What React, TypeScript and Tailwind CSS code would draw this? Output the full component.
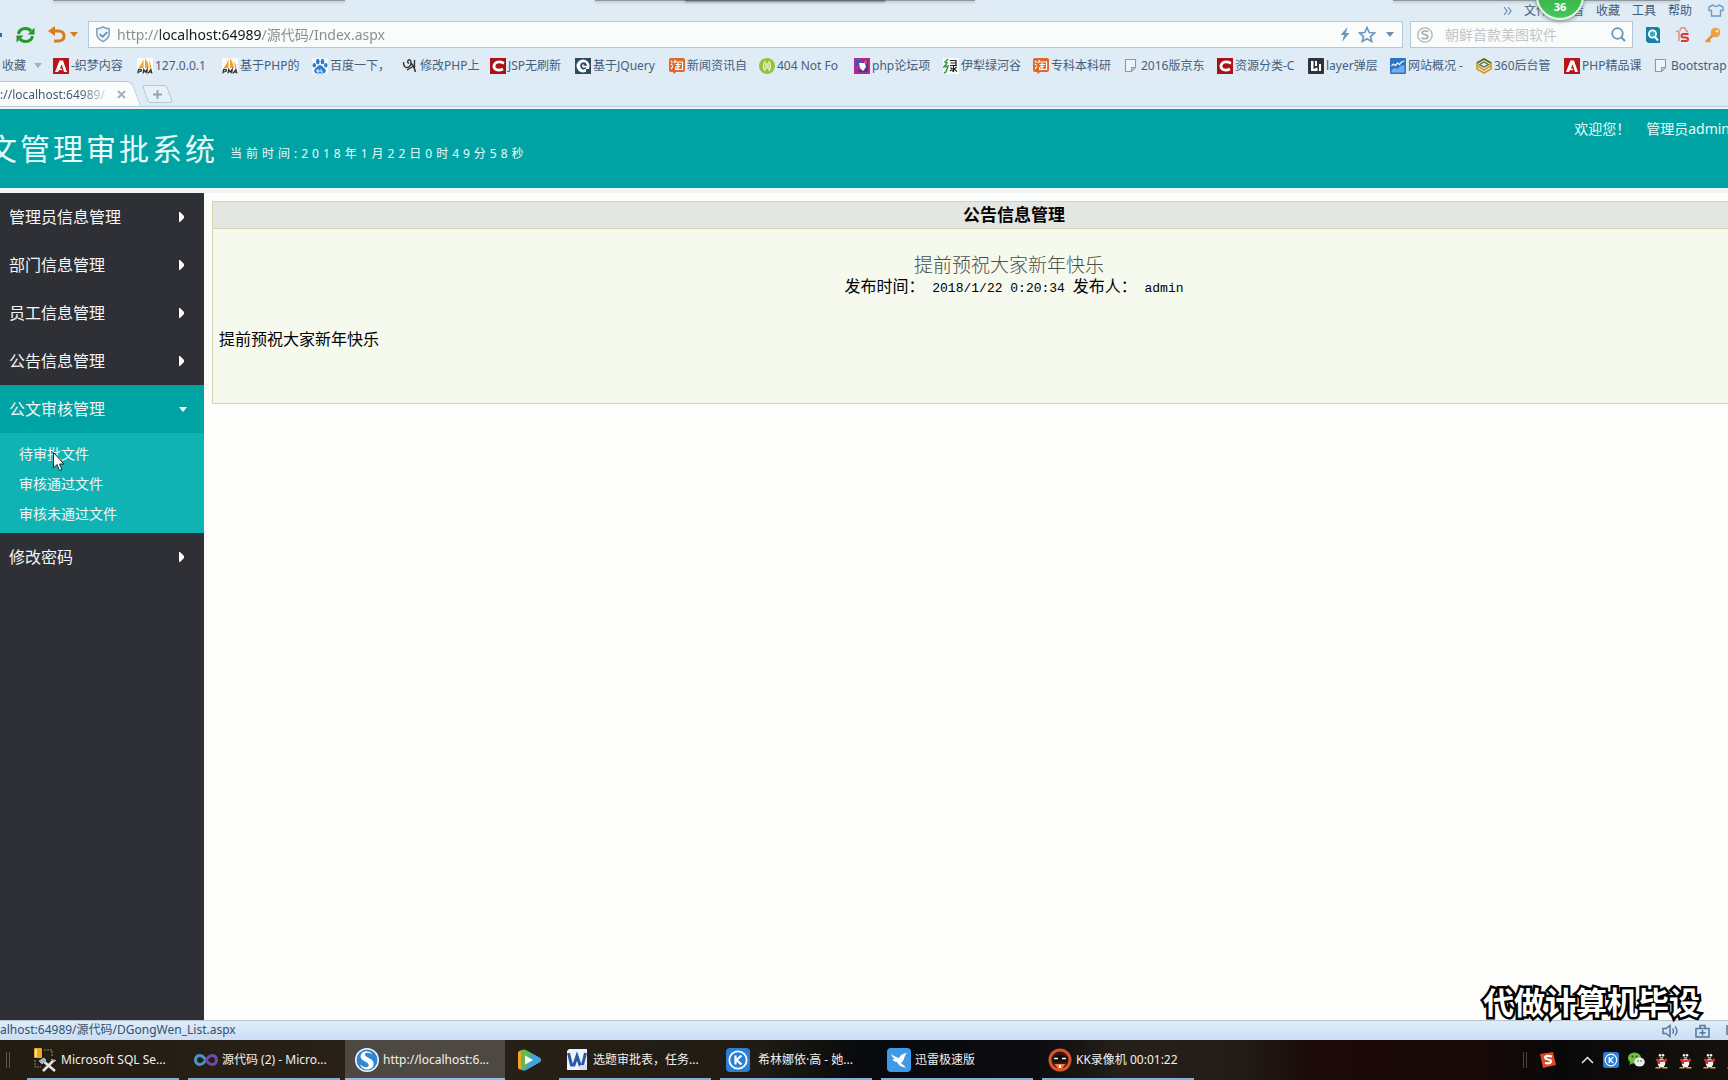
import React from 'react';
import clsx from 'clsx';

type IconName =
  | 'adobe'
  | 'pma'
  | 'baidu'
  | 'script'
  | 'redC'
  | 'darkC'
  | 'tao'
  | 'green'
  | 'forum'
  | 'lv'
  | 'page'
  | 'layer'
  | 'chart'
  | 'hex';

interface Bookmark {
  icon: IconName;
  label: string;
  width: string;
}

const bookmarks: Bookmark[] = [
  { icon: 'adobe', label: '-织梦内容', width: 'w-[84px]' },
  { icon: 'pma', label: '127.0.0.1', width: 'w-[85px]' },
  { icon: 'pma', label: '基于PHP的', width: 'w-[90px]' },
  { icon: 'baidu', label: '百度一下，', width: 'w-[90px]' },
  { icon: 'script', label: '修改PHP上', width: 'w-[88px]' },
  { icon: 'redC', label: 'JSP无刷新', width: 'w-[85px]' },
  { icon: 'darkC', label: '基于JQuery', width: 'w-[94px]' },
  { icon: 'tao', label: '新闻资讯自', width: 'w-[90px]' },
  { icon: 'green', label: '404 Not Fo', width: 'w-[95px]' },
  { icon: 'forum', label: 'php论坛项', width: 'w-[89px]' },
  { icon: 'lv', label: '伊犁绿河谷', width: 'w-[90px]' },
  { icon: 'tao', label: '专科本科研', width: 'w-[90px]' },
  { icon: 'page', label: '2016版京东', width: 'w-[94px]' },
  { icon: 'redC', label: '资源分类-C', width: 'w-[91px]' },
  { icon: 'layer', label: 'layer弹层', width: 'w-[82px]' },
  { icon: 'chart', label: '网站概况 -', width: 'w-[86px]' },
  { icon: 'hex', label: '360后台管', width: 'w-[88px]' },
  { icon: 'adobe', label: 'PHP精品课', width: 'w-[89px]' },
  { icon: 'page', label: 'Bootstrap', width: 'w-[90px]' },
];

const menu = [
  { label: '管理员信息管理' },
  { label: '部门信息管理' },
  { label: '员工信息管理' },
  { label: '公告信息管理' },
  { label: '公文审核管理', children: ['待审批文件', '审核通过文件', '审核未通过文件'] },
  { label: '修改密码' },
];

function BookmarkIcon({ name }: { name: IconName }) {
  const glyph = () => {
    switch (name) {
      case 'adobe':
        return (
          <>
            <rect width="16" height="16" fill="#b8141b" />
            <path d="M2 14 6.5 2.5H10L14 14h-3L8.6 6.2 7 10.5l2 .2v1.5l-2.8-.2L5 14z" fill="#fff" />
          </>
        );
      case 'pma':
        return (
          <>
            <rect width="16" height="16" fill="#fdfdf8" />
            <path d="M6.5 1v9H1.500Q5 6 6.500 1zM8 0v10h4Q11 4 8 0zM12 3q2 3 2.500 7H13z" fill="#f0a030" />
            <path d="M.8 15.500 1.600 11.500h2q1.200.2.800 1.300t-2.600 1M6 15.500l.8-4 1.400 2.500 2-2.500-.5 4M11 15.500l2.800-4 1.200 4M12 14.200h2.500" fill="none" stroke="#333" strokeWidth="1.300" />
          </>
        );
      case 'baidu':
        return (
          <>
            <rect width="16" height="16" fill="#f4f9fd" />
            <g fill="#2c7dd0">
              <ellipse cx="5.800" cy="3.500" rx="1.800" ry="2.700" />
              <ellipse cx="10.500" cy="3.500" rx="1.800" ry="2.700" />
              <ellipse cx="2.300" cy="7.300" rx="1.700" ry="2.300" />
              <ellipse cx="13.800" cy="7.300" rx="1.700" ry="2.300" />
              <path d="M8 7q2 0 3.500 2.500 3.500 2.500 1.800 5-1.500 1.500-5.300.8-4 .7-5.300-.8-1.600-2.500 1.800-5Q6 7 8 7z" />
            </g>
            <path d="M5 12h2v2H5zM9 11v3h2" fill="none" stroke="#fff" />
          </>
        );
      case 'script':
        return (
          <path d="M1.500 4q0 6 4 5.500Q9 9 9 4q-.5-3-2.500-2Q4.500 4 7 5.500M9 5q3 3 4.500 9M5 12l6-3.500M12.500 2v8" fill="none" stroke="#333" strokeWidth="1.400" />
        );
      case 'redC':
        return (
          <>
            <rect width="16" height="16" fill="#aa1218" />
            <path d="M14 5.200Q8 2.500 5 5.500 2.500 9 6 11.500q3 1.300 7-.5" fill="none" stroke="#fff" strokeWidth="2.800" />
          </>
        );
      case 'darkC':
        return (
          <>
            <rect width="16" height="16" fill="#2b4a5e" />
            <circle cx="8" cy="8" r="6.500" fill="#fff" />
            <path d="M11 9.500Q9 11.500 7 10 5 7.500 7.200 5.500 10 4.500 11 7H8.500" fill="none" stroke="#2b4a5e" strokeWidth="1.700" />
            <path d="M11 11h5v5h-5z" fill="#2b4a5e" />
          </>
        );
      case 'tao':
        return (
          <>
            <path d="M2 0h12q2 0 2 2v10q0 2-2 2H7l-2 2-1-2H2q-2 0-2-2V2q0-2 2-2z" fill="#dd6a28" />
            <path d="m2 3 1.500 1.500M1.800 6 3.500 7M2 11l2-3M6.500 2 5 5M6 4h7.500v7.500h-2M6.500 6.500H12M9 5v6M7 8.500h4M6.700 9v2.300h5" fill="none" stroke="#fff" strokeWidth="1.200" />
          </>
        );
      case 'green':
        return (
          <>
            <circle cx="8" cy="8" r="8" fill="#93c23c" />
            <path d="M6.300 3q-3.500 5 0 10M9.700 3q3.500 5 0 10M7 5v6M9 5v6" fill="none" stroke="#f3fade" strokeWidth="1.300" />
          </>
        );
      case 'forum':
        return (
          <>
            <rect width="16" height="16" fill="#b12a8c" />
            <path d="M2 2h6v6H2z" fill="#3a54b8" />
            <path d="M9 2h5v12H4v-2h7z" fill="#4b3796" />
            <path d="M5 5h6l1 4-3 4-3-3z" fill="#fff" />
            <circle cx="11.500" cy="4" r="1.700" fill="#ea4b6a" />
          </>
        );
      case 'lv':
        return (
          <>
            <rect width="16" height="16" fill="#fafcfa" />
            <path d="M5 1 2 4l2 1-3 4 4-1-2 6-2 1" fill="none" stroke="#3a9a4a" strokeWidth="1.500" />
            <path d="M7 2.500h6M7.500 5H13M7 7.500h7M10.500 7v6.500l-1.500-1M7.500 9.500l2 1.500M13.500 9l-2 2M7 13l2.500-2M11 11l3 2.500M13 2v5" fill="none" stroke="#222" strokeWidth="1.200" />
          </>
        );
      case 'page':
        return <path d="M2.500 1.500h10v8l-4 4h-6zM12.500 9.500h-4v4" fill="#eef4fa" stroke="#7f9cc0" strokeWidth="1.100" />;
      case 'layer':
        return (
          <>
            <rect width="16" height="16" rx="1" fill="#2c3440" />
            <path d="M3 3h2.500v8l4-1.500V13H3zM7 3h2v5H7zM11 6h2v7h-2z" fill="#fff" />
          </>
        );
      case 'chart':
        return (
          <>
            <rect width="16" height="16" rx="1" fill="#2d74c4" />
            <path d="m1.500 8 2-2 2 1.500 2-2.500 2 1.500 2-2.500 3-1" fill="none" stroke="#e4f1ff" strokeWidth="1.300" />
            <path d="m1.500 12 3-2 3 1 3-3 4-1v7.500h-13z" fill="#6fb0ec" />
          </>
        );
      case 'hex':
        return (
          <g fill="none" strokeWidth="1.300">
            <path d="M1 5 8 1l7 4v6l-7 4-7-4z" stroke="#d99a24" strokeWidth="1.700" />
            <path d="M1 5 8 1l7 4" stroke="#55702c" strokeWidth="1.700" />
            <path d="M3.500 6.500 8 4l4.500 2.500L8 9z" stroke="#55702c" />
            <path d="M1 7.500 8 12l7-4.500" stroke="#d99a24" strokeWidth="1.500" />
          </g>
        );
    }
  };

  return (
    <svg viewBox="0 0 16 16" className="size-4 shrink-0">
      {glyph()}
    </svg>
  );
}

function Caret({ className }: { className?: string }) {
  return (
    <svg viewBox="0 0 8 5" className={clsx('h-[5px] w-2 shrink-0', className)}>
      <path d="M0 0h8L4 5z" fill="currentColor" />
    </svg>
  );
}

function SogouLogo() {
  return (
    <svg viewBox="0 0 24 24" className="size-6 shrink-0">
      <circle cx="12" cy="12" r="12" fill="#f2f8fd" />
      <circle cx="12" cy="12" r="10.500" fill="#2f86d8" />
      <path d="M18 6.500Q13 1 7.500 4.500q-4 4 0 7.500l5 3q2.500 2 0 4-3 1-7.500-2.500 2.500 5.500 8 5 6.500-1.500 5.500-6.500-.5-3-4-4.500l-4-2.500q-1.500-2 .5-3 2.500-1 7 1.500z" fill="#fff" />
    </svg>
  );
}

function MenuRow() {
  return (
    <div className="relative flex h-[21px] items-center justify-end gap-3 pr-1 text-xs text-[#3d5a78]">
      <div className="absolute top-0 left-[53px] h-px w-[292px] bg-[#8f989f] shadow-[0_1px_3px_#8f989f]" />
      <div className="absolute top-0 left-[595px] h-px w-[380px] bg-[#8f989f] shadow-[0_1px_3px_#8f989f]" />
      <div className="absolute top-0 left-[685px] h-px w-[200px] bg-[#62696e] shadow-[0_1px_2px_#62696e]" />
      <div className="absolute top-0 right-12 h-px w-[287px] bg-[#8f989f] shadow-[0_1px_3px_#8f989f]" />
      <button aria-label="更多">
        <svg viewBox="0 0 9 8" className="h-2 w-[9px]">
          <path d="m1 0 3 4-3 4M5 0l3 4-3 4" fill="none" stroke="#6f8cab" strokeWidth="1.200" />
        </svg>
      </button>
      <button>文件</button>
      <button>查看</button>
      <button>收藏</button>
      <button>工具</button>
      <button>帮助</button>
      <button aria-label="皮肤" className="ml-1">
        <svg viewBox="0 0 16 13" className="h-[13px] w-4">
          <path d="M5 1 1 3v3.500h2.500V12h9V6.500H15V3l-4-2Q8 4 5 1z" fill="none" stroke="#6f9cc4" strokeWidth="1.400" />
        </svg>
      </button>
      <div className="absolute top-[-28px] right-[144px] z-10 flex size-12 items-end justify-center rounded-full border-2 border-[#e6f6e8] bg-linear-to-b from-[#2a9c3c] to-[#46c85a] pb-1 text-[11px] leading-[14px] font-bold text-white shadow-[0_1px_4px_#6b7b72]">
        36
      </div>
    </div>
  );
}

function AddressRow() {
  return (
    <div className="flex h-[27px] items-center">
      <div className="flex w-[88px] shrink-0 items-center">
        <span className="h-1 w-[2px] bg-[#2c6ea8]" />
        <button aria-label="刷新" className="ml-[13px]">
          <svg viewBox="0 0 21 18" className="h-[18px] w-[21px]">
            <path d="M3.500 8q1-5.500 7-5.500 3.500 0 5.500 2.500M17.500 10q-1 5.500-7 5.500-3.500 0-5.500-2.500" fill="none" stroke="#27962b" strokeWidth="3" />
            <path d="M19.500 1.500V8.500h-7zM1.500 16.500v-7h7z" fill="#27962b" />
          </svg>
        </button>
        <button aria-label="撤销" className="ml-3">
          <svg viewBox="0 0 18 17" className="h-[17px] w-[18px]">
            <path d="M5 5h6q5 .5 5 5t-5 5H6" fill="none" stroke="#d67d1c" strokeWidth="3" />
            <path d="M0 5 7 0v10z" fill="#d67d1c" />
          </svg>
        </button>
        <Caret className="ml-1 text-[#d67d1c]" />
      </div>
      <div className="flex h-[27px] min-w-0 flex-1 items-center border border-[#b3c8dc] bg-[#fafcfc] pr-2 pl-[6px]">
        <svg viewBox="0 0 16 18" className="h-[17px] w-4 shrink-0">
          <path d="M8 1q3 2 6.500 2v6q-.5 4.500-6.500 7.500Q2 13.500 1.500 9V3Q5 3 8 1z" fill="#eef5fa" stroke="#7ba0bd" strokeWidth="1.600" />
          <path d="m4.500 8.500 3 3 5-5" fill="none" stroke="#5f8db0" strokeWidth="1.800" />
        </svg>
        <input
          aria-label="地址"
          defaultValue="http://localhost:64989/源代码/Index.aspx"
          className="ml-[6px] min-w-0 flex-1 bg-[linear-gradient(90deg,#858b8f_0_43px,#16191c_43px_144px,#858b8f_144px)] bg-clip-text text-sm text-transparent outline-none"
        />
        <button aria-label="加速">
          <svg viewBox="0 0 10 15" className="h-[15px] w-[10px]">
            <path d="M7.500 0 .5 8h3.500L2 15l7.500-9H6z" fill="#6b9ac2" />
          </svg>
        </button>
        <button aria-label="添加收藏" className="ml-2">
          <svg viewBox="0 0 18 17" className="h-[17px] w-[18px]">
            <path d="m9 1.500 2.200 5 5.300.5-4 3.500 1.200 5L9 12.800 4.300 15.500l1.200-5-4-3.500 5.300-.5z" fill="none" stroke="#6b9ac2" strokeWidth="1.700" />
          </svg>
        </button>
        <Caret className="ml-[10px] text-[#6f8fae]" />
      </div>
      <div className="ml-[7px] flex h-[27px] w-[223px] shrink-0 items-center border border-[#b3c8dc] bg-[#fafcfc] px-[6px]">
        <svg viewBox="0 0 16 16" className="size-4 shrink-0">
          <circle cx="8" cy="8" r="7.200" fill="none" stroke="#adb2b6" strokeWidth="1.300" />
          <path d="M11.500 4.500Q6 3 5 5.500q0 1.500 3 2.200 3.500.8 2.800 2.800-1.300 2-6.300.7" fill="none" stroke="#adb2b6" strokeWidth="1.800" />
        </svg>
        <input aria-label="搜索" placeholder="朝鲜首款美图软件" className="ml-3 min-w-0 flex-1 text-sm outline-none placeholder:text-[#c3c6c9]" />
        <button aria-label="搜索">
          <svg viewBox="0 0 15 15" className="size-[15px]">
            <circle cx="6.500" cy="6.500" r="5.300" fill="none" stroke="#6b93b5" strokeWidth="1.700" />
            <path d="m10.500 10.500 3.500 3.500" stroke="#6b93b5" strokeWidth="2.200" />
          </svg>
        </button>
      </div>
      <div className="flex w-[95px] shrink-0 items-center gap-[14px] pl-3">
        <svg viewBox="0 0 16 16" className="size-4">
          <path d="M1 0h12l2 2v14H3l-2-2z" fill="#1583a8" />
          <circle cx="7.500" cy="7" r="3.600" fill="#2cb0cc" stroke="#fff" strokeWidth="1.800" />
          <path d="m10 10 3 3.500" stroke="#fff" strokeWidth="2" />
        </svg>
        <svg viewBox="0 0 16 16" className="size-4">
          <path d="M5 4q0-3.500 3-3.500t3 3.500M1 4.500h3M4 4.500v9.500M11 4.500h2" fill="none" stroke="#e58a7d" strokeWidth="1.500" />
          <path d="M13.500 7H8.500q-2 .2-2 1.800t2 1.700h2.500q2 .2 2 1.700T11 14H6" fill="none" stroke="#d93d30" strokeWidth="2" />
        </svg>
        <svg viewBox="0 0 16 16" className="size-4">
          <path d="m9 7-8 8" stroke="#e5923a" strokeWidth="2.600" />
          <path d="m3 12.500 2.500 2.500" stroke="#e5923a" strokeWidth="2" />
          <circle cx="10.500" cy="5.500" r="4.800" fill="#f0a040" />
          <circle cx="12" cy="4.200" r="1.200" fill="#fbe9d2" />
        </svg>
      </div>
    </div>
  );
}

function BookmarkRow() {
  return (
    <nav className="flex h-[33px] items-center overflow-hidden pt-[2px] text-xs whitespace-nowrap text-[#45607e]">
      <button className="flex w-[53px] shrink-0 items-center gap-2 pl-[2px]">
        收藏
        <Caret className="text-[#9db0c4]" />
      </button>
      {bookmarks.map((b) => (
        <a key={b.label} href="#" className={clsx('flex shrink-0 items-center gap-[2px]', b.width)}>
          <BookmarkIcon name={b.icon} />
          <span>{b.label}</span>
        </a>
      ))}
    </nav>
  );
}

function TabRow() {
  return (
    <div className="flex h-[26px] items-end border-b border-[#b9cfdf]">
      <div className="relative flex h-full w-[141px] items-center pt-[2px] text-xs">
        <span className="absolute inset-y-0 right-0 -left-4 origin-bottom skew-x-[20deg] rounded-tr-md border border-b-0 border-[#b3c8dc] bg-[#fbfdfd]" />
        <span className="relative w-[109px] overflow-hidden bg-[linear-gradient(90deg,#3b5670_80px,#dfe6ec_108px)] bg-clip-text whitespace-nowrap text-transparent">
          ://localhost:64989/
        </span>
        <button aria-label="关闭标签" className="relative ml-2">
          <svg viewBox="0 0 9 9" className="size-[9px]">
            <path d="m1 1 7 7M8 1 1 8" stroke="#a3b1bd" strokeWidth="2" />
          </svg>
        </button>
      </div>
      <button aria-label="新建标签" className="relative mb-[3px] ml-1 flex h-[18px] w-[25px] items-center justify-center">
        <span className="absolute inset-0 skew-x-[20deg] rounded-[3px] border border-[#b3c8dc] bg-[#e8f1f8]" />
        <svg viewBox="0 0 9 9" className="relative size-[9px]">
          <path d="M4.500 0v9M0 4.500h9" stroke="#8ba2b8" strokeWidth="1.800" />
        </svg>
      </button>
    </div>
  );
}

function Banner() {
  return (
    <header className="relative flex h-[81px] shrink-0 items-center border-t-2 border-[#e9f8f6] bg-[#00a3a3] text-[#e6fbfa]">
      <h1 className="-ml-[13px] text-[30px] leading-10 tracking-[3px]">文管理审批系统</h1>
      <p className="ml-3 pt-[10px] text-xs leading-5 tracking-[4px]">当前时间:2018年1月22日0时49分58秒</p>
      <div className="-mr-[2px] ml-auto flex gap-4 self-start pt-2 text-sm leading-6 whitespace-nowrap">
        <span>欢迎您！</span>
        <span>管理员admin</span>
      </div>
    </header>
  );
}

function Sidebar() {
  return (
    <nav className="relative w-[204px] shrink-0 bg-[#2f3036] text-[#f4f6f6]">
      <ul>
        {menu.map((item) => (
          <li key={item.label}>
            <button
              className={clsx(
                'flex h-12 w-full items-center justify-between pr-[17px] pl-[9px] text-left text-base',
                item.children && 'bg-[#00a3a3]'
              )}
            >
              {item.label}
              {item.children ? (
                <Caret className="text-white" />
              ) : (
                <svg viewBox="0 0 8 10" className="h-[10px] w-2">
                  <path d="M0 0h1l4 4v2L1 10H0z" fill="#fff" />
                </svg>
              )}
            </button>
            {item.children && (
              <ul className="bg-[#10b3b4] pt-[6px] pb-1">
                {item.children.map((child) => (
                  <li key={child}>
                    <a href="#" className="block pl-[19px] text-sm leading-[30px]">
                      {child}
                    </a>
                  </li>
                ))}
              </ul>
            )}
          </li>
        ))}
      </ul>
      <svg viewBox="0 0 12 19" className="absolute top-[259px] left-[53px] h-[19px] w-3">
        <path d="M.5.500v15.500l3.500-3.500 2.500 6 2.500-1-2.500-5.500H11z" fill="#fff" stroke="#222" />
      </svg>
    </nav>
  );
}

function Notice() {
  return (
    <main className="min-w-0 flex-1 overflow-hidden pt-2 pl-2">
      <article className="-mr-[88px] border border-[#cfd6b0] bg-[#f6f9ee] text-base text-black">
        <h2 className="h-[27px] border-b border-[#cfd6b0] bg-[#e4e6e2] text-center text-[17px] leading-[26px] font-bold">
          公告信息管理
        </h2>
        <div className="pt-[25px] text-center">
          <h3 className="pr-[10px] text-[19px] leading-[22px] font-light text-[#4a4f4a]">提前预祝大家新年快乐</h3>
          <p className="h-5 leading-5">
            发布时间：
            <span className="font-['Liberation_Mono','Noto_Sans_CJK_SC',monospace] text-[13px]"> 2018/1/22 0:20:34 </span>
            发布人：
            <span className="font-['Liberation_Mono','Noto_Sans_CJK_SC',monospace] text-[13px]"> admin</span>
          </p>
        </div>
        <p className="px-[6px] pt-[31px] pb-[52px] leading-6">提前预祝大家新年快乐</p>
      </article>
    </main>
  );
}

function StatusBar() {
  return (
    <div className="relative flex h-5 shrink-0 items-center border-t border-[#b6c2cc] bg-linear-to-b from-[#dfecf9] to-[#cddef3] text-xs text-[#2f5273]">
      <span className="pb-[2px]">alhost:64989/源代码/DGongWen_List.aspx</span>
      <div className="-mr-3 ml-auto flex items-center gap-4">
        <svg viewBox="0 0 17 14" className="h-[14px] w-[17px]">
          <path d="M1 4.500h3l4-3v11l-4-3H1z" fill="none" stroke="#54789a" strokeWidth="1.500" />
          <path d="M10.500 4.500q2 2.500 0 5M13 2.500q4 4.500 0 9" fill="none" stroke="#54789a" strokeWidth="1.400" />
        </svg>
        <svg viewBox="0 0 15 14" className="h-[14px] w-[15px]">
          <path d="M1 4.500h13v8.500H1zM5 4.500V1.500h5v3M7.500 6v5.500M4.500 8.700h6" fill="none" stroke="#54789a" strokeWidth="1.500" />
        </svg>
        <svg viewBox="0 0 14 14" className="size-[14px]">
          <path d="M1 2h12v8l-6 3-6-3z" fill="none" stroke="#54789a" strokeWidth="1.500" />
        </svg>
      </div>
      <span className="absolute right-7 bottom-[21px] font-['Noto_Sans_CJK_SC',sans-serif] text-[31px] leading-9 font-bold whitespace-nowrap text-white [-webkit-text-stroke:5px_#000] [paint-order:stroke_fill]">
        代做计算机毕设
      </span>
    </div>
  );
}

function KIcon({ className }: { className: string }) {
  return (
    <svg viewBox="0 0 24 24" className={clsx('shrink-0', className)}>
      <rect width="24" height="24" rx="4" fill="#2a7fd6" />
      <circle cx="12" cy="12" r="8.700" fill="none" stroke="#fff" strokeWidth="1.800" />
      <path d="M9.500 7.500v9M15.500 7.500 10.500 12l5 4.500" fill="none" stroke="#fff" strokeWidth="2.200" />
    </svg>
  );
}

function Penguin() {
  return (
    <svg viewBox="0 0 15 17" className="h-[17px] w-[15px]">
      <path d="M7.500 0q4.500 0 4.500 5 2.500 3 2.500 6l-2-1q-.5 4-5 4t-5-4l-2 1q0-3 2.500-6 0-5 4.500-5z" fill="#15171a" />
      <ellipse cx="7.500" cy="11" rx="3.800" ry="4.500" fill="#f4f4f4" />
      <circle cx="6" cy="3.300" r="1.200" fill="#fff" />
      <circle cx="9" cy="3.300" r="1.200" fill="#fff" />
      <path d="M2.500 6.500q5 2.500 10 0l.5 2.500Q7.500 11 2 9zM4 9h2v3H4z" fill="#d8342c" />
      <path d="M5 5h5l-2.500 1.500zM1.500 15h5v1.500h-5zM8.500 15h5v1.500h-5z" fill="#f0a52a" />
    </svg>
  );
}

const taskClass = 'flex h-10 w-[152px] shrink-0 items-center gap-1 border-b-2 border-[#7fb2d6] pt-[2px] pl-[6px] text-left';

function Taskbar() {
  return (
    <footer className="flex h-10 shrink-0 items-center overflow-hidden bg-[linear-gradient(90deg,#221c13_0%,#2a2218_25%,#1f1b13_44%,#07090d_50%,#0c0c0f_60%,#25211a_65%,#211c15_72%,#1c0a08_76%,#180808_86%,#090809_90%,#15120d_100%)] text-xs whitespace-nowrap text-[#f1f1ee]">
      <div className="ml-[6px] flex w-[21px] shrink-0 gap-[2px]">
        <span className="h-4 w-px bg-[#5f584c]" />
        <span className="h-4 w-px bg-[#5f584c]" />
      </div>
      <button className={taskClass}>
        <svg viewBox="0 0 24 24" className="size-6 shrink-0">
          <rect x="1" width="8" height="10" rx="1" fill="#e9a92a" />
          <path d="M2 1h2v8H2z" fill="#f9dc8c" />
          <path d="M11 2h8v7M2 12v7h6" fill="none" stroke="#8a9a4a" strokeDasharray="2 1" />
          <path d="m10 23 10-10M9 12l13 11" stroke="#dfe3e8" strokeWidth="2.600" />
          <path d="m6 13 5-3 2 2-4 4zM18 11l3 3 2-2" fill="#aab2bc" stroke="#aab2bc" />
        </svg>
        Microsoft SQL Se...
      </button>
      <button className={clsx(taskClass, 'ml-[9px]')}>
        <svg viewBox="0 0 24 24" className="size-6 shrink-0">
          <g fill="none" strokeWidth="3">
            <path d="M12 12Q8.500 7 5 7.500 1.500 8.500 1.500 12t3.500 4.500Q8.500 17 12 12" stroke="#4f8fc4" />
            <path d="M12 12q3.500-5 7-4.500 3.500 1 3.500 4.500T19 16.500Q15.500 17 12 12" stroke="#6d4aa8" />
          </g>
        </svg>
        源代码 (2) - Micro...
      </button>
      <button className="ml-[5px] flex h-10 w-40 shrink-0 items-center gap-1 border-b-2 border-[#8fc0e2] bg-[#4d4942] pt-[2px] pl-[10px] text-left">
        <SogouLogo />
        http://localhost:6...
      </button>
      <button aria-label="视频" className="ml-3 w-[42px] shrink-0">
        <svg viewBox="0 0 24 24" className="size-6">
          <path d="M1 5q0-3 4-2.500l6 2v15l-6 2Q1 22 1 19z" fill="#f2a32a" />
          <path d="M4 2.500Q6 1 9 2l14 8q2 2 0 4L9 22q-3 1-5-.5z" fill="#63b94a" />
          <path d="m13 4.500 10 5.500q2 2 0 4l-14 8q-2 .8-4 0Q15 16 13 4.500z" fill="#3fa3e0" />
          <path d="M8 7.500v9l8-4.500z" fill="#fff" />
        </svg>
      </button>
      <button className={taskClass}>
        <svg viewBox="0 0 24 24" className="size-6 shrink-0">
          <path d="M4 1h18v21H2V3z" fill="#eef3f9" />
          <path d="m3.500 5 3 12h2.500L12 8l3 9h2.500l3-12" fill="none" stroke="#2559a8" strokeWidth="3" />
          <path d="M15 17h7v5h-7z" fill="#d3dfee" />
        </svg>
        选题审批表，任务...
      </button>
      <button className={clsx(taskClass, 'ml-[9px]')}>
        <KIcon className="mr-1 size-6" />
        希林娜依·高 - 她...
      </button>
      <button className={clsx(taskClass, 'ml-[9px]')}>
        <svg viewBox="0 0 24 24" className="size-6 shrink-0">
          <rect width="24" height="24" rx="4" fill="#3c9ae6" />
          <path d="M4 6q5 3.500 8 4 2-4.500 8-5-2.500 2-3 5.500Q16.500 14 14 15l5 4.500Q12 19 10 14q-3.500 0-4.500-3H8Q5 9.500 4 6z" fill="#fff" />
        </svg>
        迅雷极速版
      </button>
      <button className={clsx(taskClass, 'ml-[9px]')}>
        <svg viewBox="0 0 24 24" className="size-6 shrink-0">
          <circle cx="12" cy="12" r="11.500" fill="#d9532a" />
          <circle cx="12" cy="12" r="8.500" fill="#3a1712" />
          <path d="M3.500 9.500q8.500-5 17 0l-2 4.500h-4L12 12l-2.500 2h-4z" fill="#0e0c0c" />
          <path d="M6 10.500h4M14 10.500h4" stroke="#fff" strokeWidth="1.500" />
          <path d="M6.500 16h11L14 20.500h-4z" fill="#ec7d45" />
          <path d="M11 17h2v3h-2z" fill="#fff" />
        </svg>
        KK录像机 00:01:22
      </button>
      <div className="-mr-[13px] ml-auto flex shrink-0 items-center gap-[9px]">
        <div className="mr-1 flex gap-[2px]">
          <span className="h-4 w-px bg-[#4c4643]" />
          <span className="h-4 w-px bg-[#4c4643]" />
        </div>
        <svg viewBox="0 0 16 16" className="mr-4 size-4">
          <path d="m0 2 13-2 3 13-13 3z" fill="#da4a2a" />
          <path d="M12 4.500Q6 3 5 5q0 2 3 2.500 3.500.5 3 2.500-1 2-6 1" fill="none" stroke="#fff" strokeWidth="2.200" />
        </svg>
        <svg viewBox="0 0 13 8" className="h-2 w-[13px]">
          <path d="m1 7 5.500-5.500L12 7" fill="none" stroke="#e8e8e8" strokeWidth="1.500" />
        </svg>
        <KIcon className="size-4" />
        <svg viewBox="0 0 17 16" className="h-4 w-[17px]">
          <ellipse cx="6.500" cy="6" rx="6.500" ry="5.500" fill="#6ac03c" />
          <path d="m2 10-.5 3 3.500-2z" fill="#6ac03c" />
          <ellipse cx="11.500" cy="10" rx="5.300" ry="4.500" fill="#e9eeea" />
          <circle cx="4.500" cy="4.500" r="1" fill="#25501a" />
          <circle cx="8.500" cy="4.500" r="1" fill="#25501a" />
          <circle cx="10" cy="9" r=".8" fill="#555" />
          <circle cx="13" cy="9" r=".8" fill="#555" />
        </svg>
        <Penguin />
        <Penguin />
        <Penguin />
        <Penguin />
      </div>
    </footer>
  );
}

export default function App() {
  return (
    <div className="flex h-screen flex-col overflow-hidden bg-[#fdfefc] font-['Noto_Sans','Noto_Sans_CJK_SC',sans-serif]">
      <div className="shrink-0 bg-[#dfebf5]">
        <MenuRow />
        <AddressRow />
        <BookmarkRow />
        <TabRow />
      </div>
      <Banner />
      <div className="flex min-h-0 flex-1 border-t-[5px] border-[#eef6f5]">
        <Sidebar />
        <Notice />
      </div>
      <StatusBar />
      <Taskbar />
    </div>
  );
}
